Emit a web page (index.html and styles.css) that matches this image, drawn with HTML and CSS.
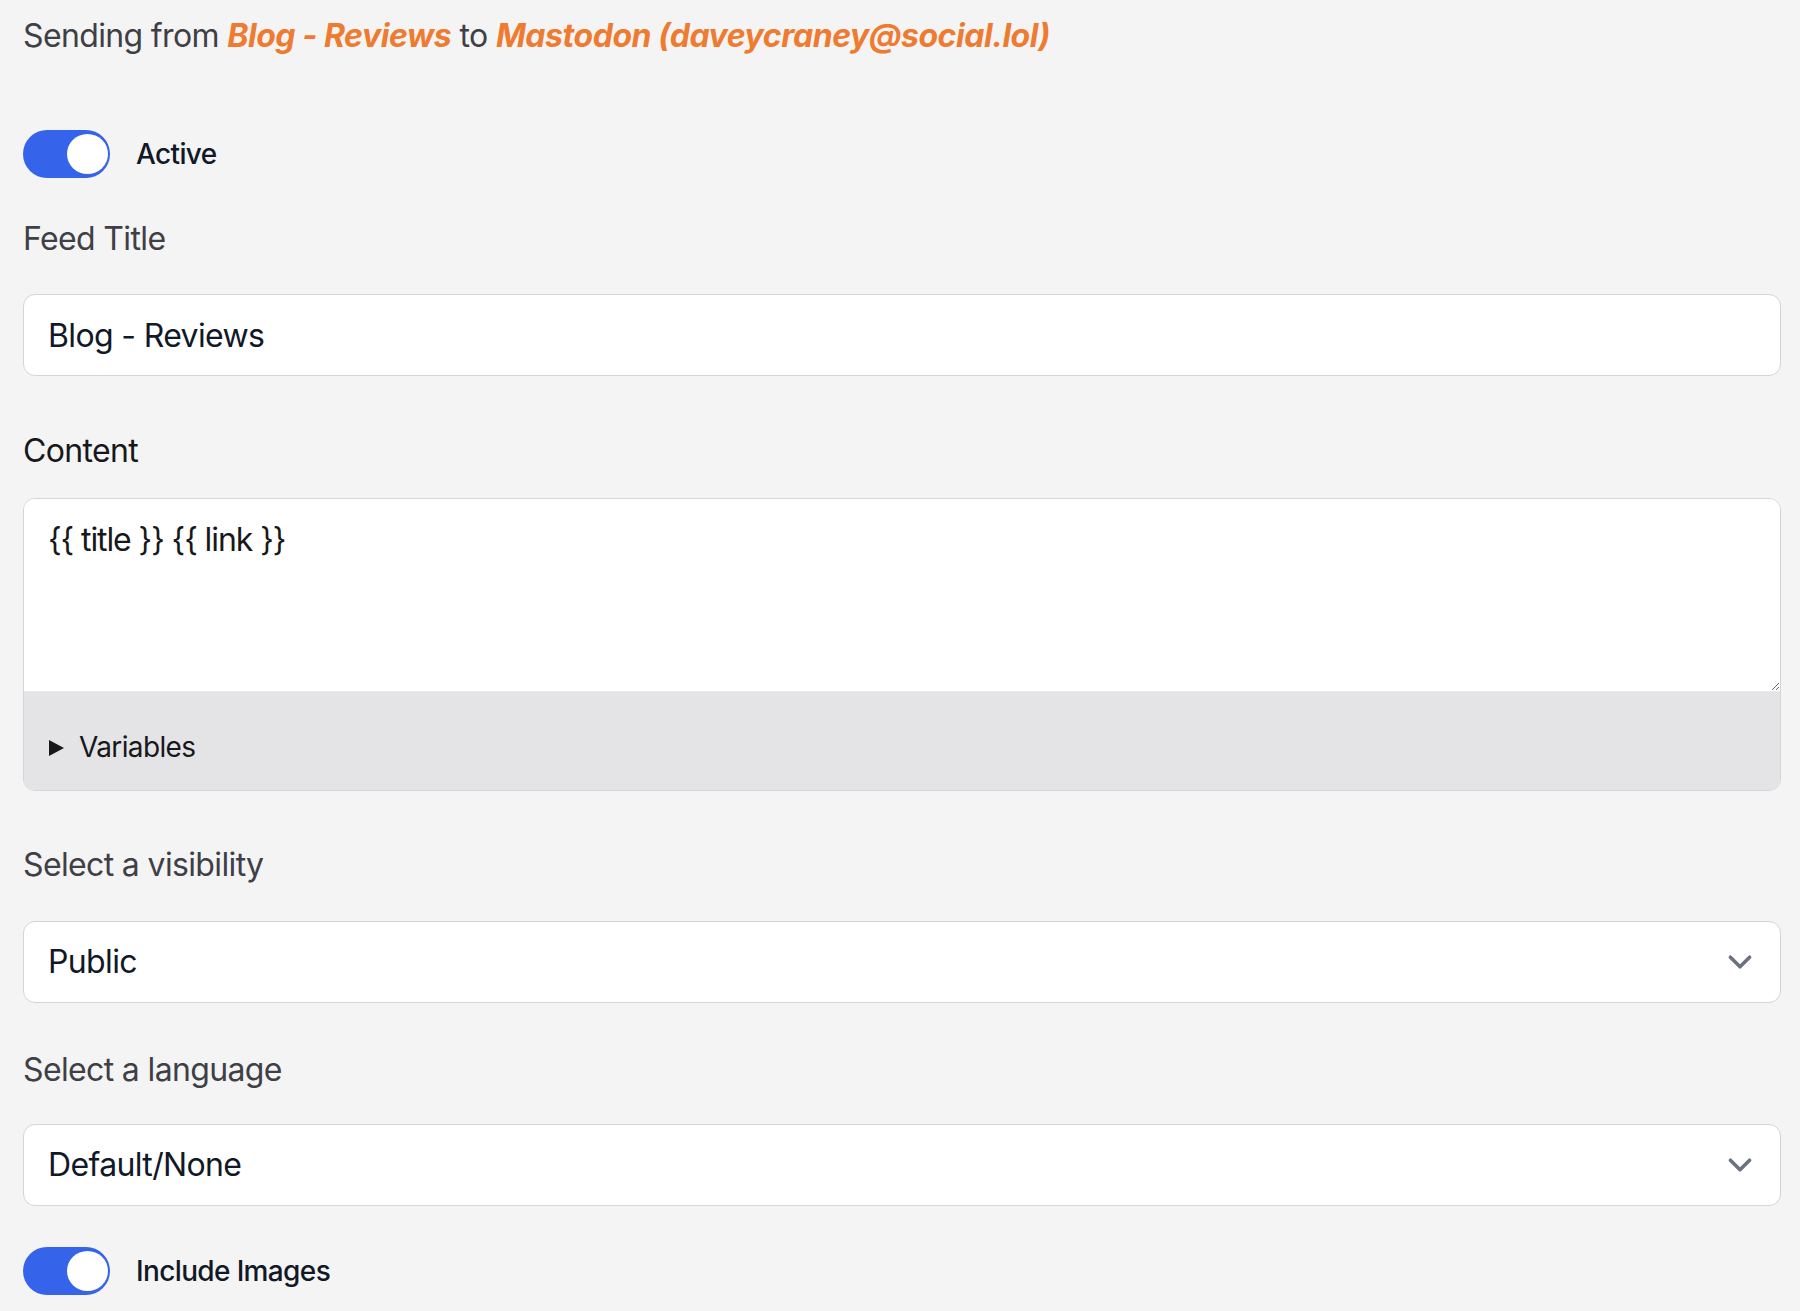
FILE: index.html
```html
<!DOCTYPE html>
<html lang="en">

<head>
    <meta charset="UTF-8">
    <title>Edit feed</title>
    <link rel="stylesheet" href="styles.css">
</head>

<body>
    <div class="page">
        <!-- where the posts go -->
        <p class="sendLine">
            Sending from <em>Blog - Reviews</em> to <em>Mastodon (daveycraney@social.lol)</em>
        </p>

        <label class="toggleRow activeRow">
            <span class="toggle"><span class="knob"></span></span>
            <span class="toggleText">Active</span>
        </label>

        <label class="fieldLabel titleLabel" for="feedTitle">Feed Title</label>
        <input class="textInput titleInput" id="feedTitle" type="text" value="Blog - Reviews">

        <label class="fieldLabel contentLabel" for="content">Content</label>
        <div class="contentBox">
            <textarea class="contentArea" id="content">{{ title }} {{ link }}</textarea>
            <details class="variables">
                <summary><span class="arrow"></span>Variables</summary>
            </details>
        </div>

        <label class="fieldLabel visibilityLabel" for="visibility">Select a visibility</label>
        <div class="selectWrap visibilitySelect">
            <select class="selectBox" id="visibility">
                <option>Public</option>
                <option>Unlisted</option>
                <option>Followers only</option>
            </select>
            <svg class="chevron" viewBox="0 0 20 20" fill="none">
                <path d="M6 8l4 4 4-4" stroke="#6b7280" stroke-width="1.5" stroke-linecap="round" stroke-linejoin="round"/>
            </svg>
        </div>

        <label class="fieldLabel languageLabel" for="language">Select a language</label>
        <div class="selectWrap languageSelect">
            <select class="selectBox" id="language">
                <option>Default/None</option>
                <option>English</option>
            </select>
            <svg class="chevron" viewBox="0 0 20 20" fill="none">
                <path d="M6 8l4 4 4-4" stroke="#6b7280" stroke-width="1.5" stroke-linecap="round" stroke-linejoin="round"/>
            </svg>
        </div>

        <label class="toggleRow imagesRow">
            <span class="toggle"><span class="knob"></span></span>
            <span class="toggleText">Include Images</span>
        </label>
    </div>
</body>

</html>
```

FILE: styles.css
```css
* {
    margin: 0;
    padding: 0;
    box-sizing: border-box;
}

body {
    background: #f4f4f5;
    font-family: Inter, "Liberation Sans", sans-serif;
    font-size: 32px;
    line-height: 48px;
    letter-spacing: -0.02em;
    color: #18181b;
}

.page {
    padding: 12px 19px 0 23px;
}

.sendLine {
    color: #3f3f46;
}

.sendLine em {
    color: #ee7b30;
    font-weight: 700;
    font-style: italic;
    letter-spacing: -0.014em;
}

/* toggles */
.toggleRow {
    display: flex;
    align-items: center;
}

.activeRow {
    margin-top: 70px;
}

.imagesRow {
    margin-top: 41px;
}

.toggle {
    display: flex;
    justify-content: flex-end;
    align-items: center;
    width: 87px;
    height: 48px;
    padding: 4px 2px;
    border-radius: 24px;
    background: #3563e9;
}

.toggle .knob {
    width: 41px;
    height: 40px;
    border-radius: 50%;
    background: #fff;
}

.toggleText {
    margin-left: 26px;
    font-size: 28px;
    line-height: 40px;
    font-weight: 500;
    color: #111827;
}

/* labels */
.fieldLabel {
    display: block;
    color: #3f3f46;
}

.titleLabel {
    margin-top: 37px;
}

.contentLabel {
    margin-top: 51px;
    color: #18181b;
}

.visibilityLabel {
    margin-top: 50px;
}

.languageLabel {
    margin-top: 43px;
}

/* inputs */
.textInput,
.selectBox {
    display: block;
    width: 100%;
    height: 82px;
    padding: 16px 24px;
    border: 1px solid #d4d4d8;
    border-radius: 12px;
    background: #fff;
    font: inherit;
    letter-spacing: inherit;
    color: #111827;
    outline: none;
}

.titleInput {
    margin-top: 31px;
}

.contentBox {
    margin-top: 23px;
    border: 1px solid #d4d4d8;
    border-radius: 12px;
    overflow: hidden;
    background: #fff;
}

.contentArea {
    display: block;
    width: 100%;
    height: 192px;
    padding: 17px 24px;
    border: 0;
    background: #fff;
    font: inherit;
    letter-spacing: -0.034em;
    color: #18181b;
    resize: vertical;
    outline: none;
}

.variables {
    border-top: 1px solid #e9e9ec;
    background: #e4e4e7;
    padding: 35px 24px 23px;
}

.variables summary {
    display: flex;
    align-items: center;
    list-style: none;
    font-size: 28px;
    line-height: 40px;
    color: #18181b;
    cursor: pointer;
}

.variables summary::-webkit-details-marker {
    display: none;
}

.variables .arrow {
    width: 0;
    height: 0;
    margin: 2px 15px 0 1px;
    border-left: 15px solid #18181b;
    border-top: 8.5px solid transparent;
    border-bottom: 8.5px solid transparent;
}

/* selects */
.selectWrap {
    position: relative;
}

.visibilitySelect {
    margin-top: 32px;
}

.languageSelect {
    margin-top: 30px;
}

.selectBox {
    appearance: none;
    -webkit-appearance: none;
    padding-right: 80px;
}

.selectWrap .chevron {
    position: absolute;
    right: 17px;
    top: 17px;
    width: 48px;
    height: 48px;
    pointer-events: none;
}
```
